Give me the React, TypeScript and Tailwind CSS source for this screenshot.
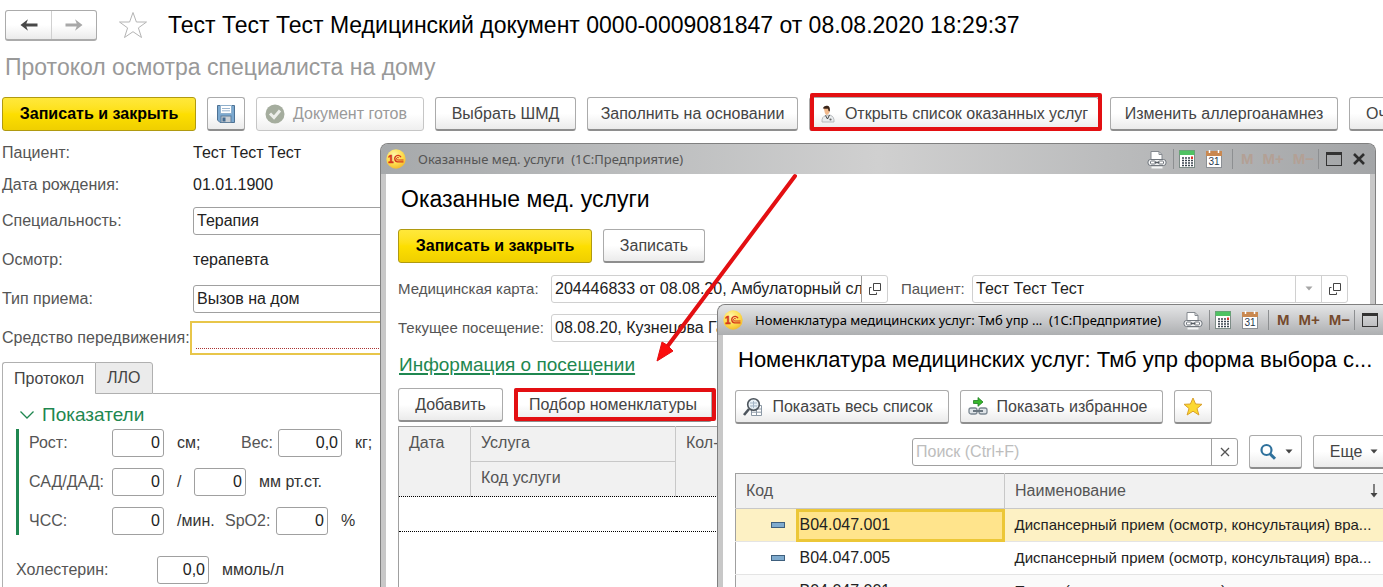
import { useId, useState } from 'react'
import type { ReactNode } from 'react'
import clsx from 'clsx'

const services = [
  { code: 'B04.047.001', name: 'Диспансерный прием (осмотр, консультация) вра...' },
  { code: 'B04.047.005', name: 'Диспансерный прием (осмотр, консультация) вра...' },
  { code: 'B04.047.001', name: 'Прием (осмотр, консультация) врача' },
]

/* ---------- icons ---------- */

function ArrowIcon({ flip = false }: { flip?: boolean }) {
  return (
    <svg viewBox="0 0 18 14" className={clsx('w-[18px] h-[14px]', flip ? 'text-[#a8a8a8]' : 'text-[#484848]')}>
      <g transform={flip ? 'translate(18 0) scale(-1 1)' : undefined}>
        <path d="M0.500 7 L8 1.300 L6.300 5.600 H17.500 V8.400 H6.300 L8 12.700 Z" fill="currentColor" />
      </g>
    </svg>
  )
}

function StarOutline() {
  return (
    <svg viewBox="0 0 30 28" className="w-[30px] h-[28px]">
      <path
        d="M15 1.500 L18.400 11 H28.500 L20.400 16.900 L23.500 26.500 L15 20.700 L6.500 26.500 L9.600 16.900 L1.500 11 H11.600 Z"
        fill="#fff"
        stroke="#b4b4b4"
      />
    </svg>
  )
}

function StarFilled() {
  return (
    <svg viewBox="0 0 20 19" className="w-5 h-[19px]">
      <path
        d="M10 1 L12.600 7 L19 7.300 L14 11.500 L15.900 18 L10 14.200 L4.100 18 L6 11.500 L1 7.300 L7.400 7 Z"
        fill="#fcd931"
        stroke="#d9a02c"
        strokeLinejoin="round"
      />
    </svg>
  )
}

function DiskIcon() {
  return (
    <svg viewBox="0 0 18 18" className="size-[18px]">
      <path d="M0.500 0.500 H17.500 V17.500 H3 L0.500 15 Z" fill="#7ba9d0" stroke="#4d7193" />
      <rect x="3.500" y="0.500" width="11" height="8" fill="#fff" stroke="#8fb0cc" />
      <path d="M5 3.500 H13 M5 5.800 H13" stroke="#9bb6cf" />
      <rect x="4" y="11" width="10" height="6.500" fill="#c9ced3" stroke="#5f7f9c" />
      <rect x="5.500" y="12.500" width="3" height="4" fill="#41698f" />
    </svg>
  )
}

function ReadyIcon() {
  return (
    <svg viewBox="0 0 20 20" className="size-5">
      <circle cx="10" cy="10" r="9.500" fill="#a5ad9e" />
      <path d="M5 9.500 L9 13.500 L15 6.500" fill="none" stroke="#eceeea" strokeWidth="3" />
    </svg>
  )
}

function DoctorIcon() {
  return (
    <svg viewBox="0 0 16 18" className="w-4 h-[18px]">
      <path d="M2 17 Q1.500 11.500 6 10.500 L10 10 Q14.500 11.500 14 17 Z" fill="#e9ecee" stroke="#a9adb0" strokeWidth="0.800" />
      <path d="M3.500 3 Q6 0.800 9 3 L9.500 7.500 Q8 10.500 6 9.800 Q4.500 8 4.200 5 Z" fill="#f1b98c" />
      <path d="M2.800 3.300 Q4 0 7.500 0.800 Q10.500 1.500 9.800 6.500 L8.600 6 L8 3.800 Q5 4 2.800 3.300 Z" fill="#3a2418" />
      <path d="M5.500 10.500 L7.500 14 L9.500 10" fill="none" stroke="#444" strokeWidth="1" />
      <circle cx="10.500" cy="14.500" r="1.100" fill="#666" />
    </svg>
  )
}

function Logo() {
  const id = useId()
  return (
    <svg viewBox="0 0 20 20" className="size-5 shrink-0">
      <defs>
        <radialGradient id={id} cx="0.4" cy="0.3" r="0.75">
          <stop offset="0" stopColor="#fff6a8" />
          <stop offset="0.6" stopColor="#fddc4c" />
          <stop offset="1" stopColor="#f2b62c" />
        </radialGradient>
      </defs>
      <circle cx="10" cy="10" r="9.700" fill={`url(#${id})`} />
      <text x="2" y="13.500" fontSize="10" fontWeight="700" fontFamily="Liberation Sans, sans-serif" fill="#d4371b" stroke="#d4371b" strokeWidth="0.500">
        1
      </text>
      {/* concentric arcs running into the long foot of the mark */}
      <path d="M15 8.200 A3.300 3.300 0 1 0 11.500 12.900 H17.500" fill="none" stroke="#d4371b" strokeWidth="1.400" />
      <path d="M12.900 9 A1.300 1.300 0 1 0 12 11 H17.500" fill="none" stroke="#d4371b" strokeWidth="1" />
    </svg>
  )
}

function PrinterIcon() {
  return (
    <svg viewBox="0 0 20 19" className="w-5 h-[19px]">
      <path d="M4 10 V1.500 H12 L15 4.500 V10" fill="#fff" stroke="#84898f" />
      <path d="M12 1.500 V4.500 H15" fill="none" stroke="#84898f" />
      <rect x="1" y="9.500" width="18" height="6" rx="2.500" fill="#f4f5f6" stroke="#70767d" />
      <rect x="3.500" y="11" width="5" height="3" rx="1" fill="#fff" stroke="#70767d" />
      <rect x="11.500" y="11" width="5" height="3" rx="1" fill="#fff" stroke="#70767d" />
      <path d="M7.500 12.500 H12.500" stroke="#555b62" strokeWidth="1.500" />
      <path d="M4.500 17.500 H15.500" stroke="#f4f5f6" strokeWidth="2" />
    </svg>
  )
}

function CalcIcon() {
  return (
    <svg viewBox="0 0 16 18" className="w-4 h-[18px]">
      <rect x="0.500" y="0.500" width="15" height="17" fill="#fff" stroke="#7c8b86" />
      <rect x="0.500" y="0.500" width="15" height="4.500" fill="#4fc262" />
      <path
        d="M3 8 H5 M6 8 H8 M9 8 H11 M3 10.500 H5 M6 10.500 H8 M9 10.500 H11 M3 13 H5 M6 13 H8 M9 13 H11 M3 15.500 H5 M6 15.500 H8 M9 15.500 H11 M12 10.500 H14 M12 13 H14 M12 15.500 H14"
        stroke="#3c4650"
        strokeWidth="1.600"
      />
      <path d="M12 7.800 H14" stroke="#d9342b" strokeWidth="2.400" />
    </svg>
  )
}

function CalendarIcon() {
  return (
    <svg viewBox="0 0 16 18" className="w-4 h-[18px]">
      <rect x="0.500" y="1.500" width="15" height="16" fill="#fff" stroke="#8b8f94" />
      <rect x="0" y="1" width="16" height="5" fill="#c98850" />
      <path d="M3.500 0 V3 M12.500 0 V3" stroke="#fff" strokeWidth="1.500" />
      <text x="8" y="15.300" textAnchor="middle" fontSize="10" fontFamily="Liberation Sans, sans-serif" fill="#26384e">
        31
      </text>
    </svg>
  )
}

function MaximizeIcon() {
  return (
    <svg viewBox="0 0 16 14" className="w-4 h-[14px]">
      <rect x="0.500" y="0.500" width="15" height="13" fill="none" stroke="#333" />
      <path d="M0.500 1.500 H15.500" stroke="#333" strokeWidth="3" />
    </svg>
  )
}

function CloseIcon() {
  return (
    <svg viewBox="0 0 12 12" className="size-3">
      <path d="M1 1 L11 11 M11 1 L1 11" stroke="#2e2e2e" strokeWidth="2.600" />
    </svg>
  )
}

function OpenIcon() {
  return (
    <svg viewBox="0 0 12 12" className="size-3">
      <path d="M4.500 0.500 H11.500 V7.500 H4.500 Z M2.500 4.500 H0.500 V11.500 H7.500 V9.500" fill="none" stroke="#444" />
    </svg>
  )
}

function ListSearchIcon() {
  return (
    <svg viewBox="0 0 20 20" className="size-5">
      <path d="M8.500 8.500 H18.500 V18.500 H8.500 Z M8.500 12 H18.500 M8.500 15.200 H18.500 M13.500 8.500 V18.500" fill="#fff" stroke="#8b98a5" />
      <circle cx="10.500" cy="7.500" r="5.800" fill="#e4edf4" fillOpacity="0.850" stroke="#4c545c" strokeWidth="1.600" />
      <path d="M7 6 H14 M7 9 H14 M10.500 4 V11" stroke="#a3b5c6" />
      <path d="M6 12 L1 18" stroke="#4c545c" strokeWidth="2.600" />
    </svg>
  )
}

function FavoritesIcon() {
  return (
    <svg viewBox="0 0 20 19" className="w-5 h-[19px]">
      <path d="M5.500 3.500 H10 V0.500 L15 5 L10 9.300 V6.500 H5.500 Z" fill="#38b72c" stroke="#1e7d22" strokeWidth="0.800" />
      <rect x="1" y="11" width="8" height="6" rx="2" fill="#dfe4e8" stroke="#7b8791" strokeWidth="1.300" />
      <rect x="11" y="11" width="8" height="6" rx="2" fill="#dfe4e8" stroke="#7b8791" strokeWidth="1.300" />
      <path d="M5 14 H15" stroke="#6a7680" strokeWidth="1.800" />
    </svg>
  )
}

function MagnifierIcon() {
  return (
    <svg viewBox="0 0 18 18" className="size-[18px]">
      <circle cx="7.500" cy="7" r="5" fill="none" stroke="#2f719c" strokeWidth="2.200" />
      <path d="M11 10.800 L16 15.800" stroke="#2f719c" strokeWidth="3" />
    </svg>
  )
}

function Caret({ light = false }: { light?: boolean }) {
  return (
    <svg viewBox="0 0 8 5" className="w-2 h-[5px]">
      <path d="M0.500 0.500 H7.500 L4 4.500 Z" fill={light ? '#a5a5a5' : '#444'} />
    </svg>
  )
}

/* ---------- controls ---------- */

type ButtonProps = {
  children: ReactNode
  variant?: 'plain' | 'primary' | 'muted'
  label?: string
  className?: string
  disabled?: boolean
}

function Button({ children, variant = 'plain', label, className, disabled }: ButtonProps) {
  return (
    <button
      type="button"
      aria-label={label}
      disabled={disabled}
      className={clsx(
        'relative flex h-[34px] shrink-0 items-center justify-center rounded-[3px] border whitespace-nowrap',
        variant === 'primary' &&
          'w-[194px] border-[#b09a10] bg-linear-to-b from-[#ffe83a] via-[#fddf00] to-[#efcf00] font-bold text-black',
        variant === 'plain' && 'border-[#ababab] border-b-[#8e8e8e] border-b-2 bg-linear-to-b from-white from-50% to-[#ebebeb] text-[#444]',
        variant === 'muted' && 'border-[#c6c6c6] bg-linear-to-b from-white from-50% to-[#efefef] text-[#9a9a9a]',
        className,
      )}
    >
      {children}
    </button>
  )
}

function NumberField({ label, value, wide = false }: { label: string; value: string; wide?: boolean }) {
  return (
    <input
      aria-label={label}
      defaultValue={value}
      className={clsx('h-7 shrink-0 rounded-[3px] border border-[#a0a0a0] bg-white px-[3px] text-right text-[#222]', wide ? 'w-16' : 'w-[52px]')}
    />
  )
}

function Field({ label, children, className }: { label: string; children: ReactNode; className?: string }) {
  return (
    <label className={clsx('flex items-center', className ?? 'h-[39px]')}>
      <span className="w-[191px] shrink-0 whitespace-nowrap">{label}</span>
      {children}
    </label>
  )
}

function TitleBar({ title, active = false, closable = false }: { title: string; active?: boolean; closable?: boolean }) {
  return (
    <header
      className={clsx(
        'flex h-[30px] shrink-0 items-center pl-[5px] font-["Noto_Sans","Liberation_Sans",sans-serif] text-[13px]',
        active
          ? 'bg-linear-to-b from-[#e4e5e6] via-[#c9cacc] to-[#adafb1] text-black'
          : 'bg-linear-to-r from-[#a6a9ab] via-[#d0d0d0] to-[#a3a5a7] text-[#555]',
      )}
    >
      <Logo />
      <span className="ml-3 min-w-0 flex-1 truncate whitespace-pre">{title}</span>
      <div className="flex h-full shrink-0 items-center">
        <button type="button" aria-label="Печать" className="pr-[6px]"><PrinterIcon /></button>
        <span className="h-5 w-px bg-[#8d8f91]" />
        <button type="button" aria-label="Калькулятор" className="pr-[11px] pl-[5px]"><CalcIcon /></button>
        <button type="button" aria-label="Календарь" className="pr-[10px]"><CalendarIcon /></button>
        <span className="h-5 w-px bg-[#8d8f91]" />
        <div
          className={clsx(
            'flex w-[85px] gap-[9px] pl-2 font-["Liberation_Sans",sans-serif] text-[15px] font-bold whitespace-nowrap',
            active ? 'text-[#754a2d]' : 'text-[#b3a095]',
          )}
        >
          <button type="button">M</button>
          <button type="button">M+</button>
          <button type="button">M−</button>
        </div>
        <span className="h-5 w-px bg-[#8d8f91]" />
        <button type="button" aria-label="Развернуть" className="pr-[5px] pl-[7px]"><MaximizeIcon /></button>
        {closable && <button type="button" aria-label="Закрыть" className="pr-[10px] pl-[6px]"><CloseIcon /></button>}
      </div>
    </header>
  )
}

function Highlight({ className }: { className: string }) {
  return <span className={clsx('pointer-events-none absolute rounded-[2px] border-4 border-[#e30f12]', className)} />
}

/* ---------- document form ---------- */

function ProtocolForm() {
  const [tab, setTab] = useState('Протокол')
  return (
    <section className="flex flex-col pr-4 text-[#555]">
      <div className="mt-[6px] pl-[2px]">
        <Field label="Пациент:" className="h-8"><output className="text-[#222]">Тест Тест Тест</output></Field>
        <Field label="Дата рождения:" className="h-8"><output className="text-[#222]">01.01.1900</output></Field>
        <Field label="Специальность:">
          <input defaultValue="Терапия" className="h-7 min-w-0 flex-1 rounded-[3px] border border-[#a0a0a0] px-[3px] text-[#222]" />
        </Field>
        <Field label="Осмотр:"><output className="text-[#222]">терапевта</output></Field>
        <Field label="Тип приема:">
          <input defaultValue="Вызов на дом" className="h-7 min-w-0 flex-1 rounded-[3px] border border-[#a0a0a0] px-[3px] text-[#222]" />
        </Field>
        <Field label="Средство передвижения:">
          <span className="-ml-[3px] flex h-[34px] flex-1 border-2 border-[#e8c64a] px-1 pb-1">
            <input className="w-full border-b border-dotted border-[#a33] outline-none" />
          </span>
        </Field>
      </div>

      <div className="mt-[5px] ml-[2px] flex" role="tablist">
        {['Протокол', 'ЛЛО'].map((name) => (
          <button
            key={name}
            type="button"
            role="tab"
            aria-selected={tab === name}
            onClick={() => setTab(name)}
            className={clsx(
              'h-8 border-[#b0b0b0] px-[11px] text-[#444]',
              tab === name ? 'rounded-tl-[3px] border-t border-l' : 'rounded-tr-[3px] border bg-[#ebebeb]',
            )}
          >
            {name}
          </button>
        ))}
        <span className="flex-1 border-b border-[#b0b0b0]" />
      </div>

      <div className="ml-[2px] h-[220px] border-l border-[#b0b0b0] pt-[7px] pl-[13px]">
        <button type="button" className="flex h-7 items-center gap-2 pl-1 text-[19px] text-[#1f8750]">
          <svg viewBox="0 0 14 8" className="w-[14px] h-2"><path d="M0.500 0.500 L7 7 L13.500 0.500" fill="none" stroke="currentColor" strokeWidth="1.300" /></svg>
          Показатели
        </button>
        <div className="flex flex-col gap-[11px] border-l-3 border-[#1f8750] pl-[10px]">
          <div className="flex h-7 items-center">
            <span className="w-[83px]">Рост:</span>
            <NumberField label="Рост" value="0" />
            <span className="ml-[13px] w-16 text-[#333]">см;</span>
            <span className="w-[37px]">Вес:</span>
            <NumberField label="Вес" value="0,0" wide />
            <span className="ml-[13px] text-[#333]">кг;</span>
          </div>
          <div className="flex h-7 items-center">
            <span className="w-[83px]">САД/ДАД:</span>
            <NumberField label="САД" value="0" />
            <span className="ml-[13px] w-[17px] text-[#333]">/</span>
            <NumberField label="ДАД" value="0" />
            <span className="ml-[13px] text-[#333]">мм рт.ст.</span>
          </div>
          <div className="flex h-7 items-center">
            <span className="w-[83px]">ЧСС:</span>
            <NumberField label="ЧСС" value="0" />
            <span className="ml-[13px] w-12 text-[#333]">/мин.</span>
            <span className="w-[51px]">SpO2:</span>
            <NumberField label="SpO2" value="0" />
            <span className="ml-[13px] text-[#333]">%</span>
          </div>
        </div>
        <div className="mt-[21px] flex h-7 items-center">
          <span className="w-[141px]">Холестерин:</span>
          <NumberField label="Холестерин" value="0,0" />
          <span className="ml-[13px] text-[#333]">ммоль/л</span>
        </div>
      </div>
    </section>
  )
}

/* ---------- services window ---------- */

function ServicesWindow() {
  return (
    <section className="absolute top-[143px] right-[7px] bottom-0 left-[380px] flex flex-col overflow-hidden rounded-t-lg border border-b-0 border-[#808080] bg-[#c8c8c8]">
      <TitleBar title="Оказанные мед. услуги  (1С:Предприятие)" closable />
      <div className="mx-[5px] flex-1 overflow-hidden bg-white pt-3 pl-3 text-[#555]">
        <h2 className="h-[26px] pl-[3px] text-[23px] leading-[26px] text-black">Оказанные мед. услуги</h2>
        <div className="mt-[17px] flex gap-[11px]">
          <Button variant="primary">Записать и закрыть</Button>
          <Button className="w-[102px]">Записать</Button>
        </div>
        <div className="mt-[6px] flex h-[39px] items-center pr-[22px]">
          <label htmlFor="card" className="w-[153px] shrink-0 text-[15px] whitespace-nowrap">Медицинская карта:</label>
          <div className="flex h-7 w-[337px] rounded-[3px] border border-[#d0d0d0]">
            <input id="card" defaultValue="204446833 от 08.08.20, Амбулаторный сл" className="min-w-0 flex-1 pl-[3px] text-[#222]" />
            <button type="button" aria-label="Открыть карту" className="flex w-[26px] items-center justify-center border-l border-[#a0a0a0]"><OpenIcon /></button>
          </div>
          <label htmlFor="patient" className="ml-[13px] w-[71px] shrink-0 text-[15px]">Пациент:</label>
          <div className="flex h-7 flex-1 rounded-[3px] border border-[#d0d0d0]">
            <input id="patient" defaultValue="Тест Тест Тест" className="min-w-0 flex-1 pl-[3px] text-[#222]" />
            <button type="button" aria-label="Выбрать пациента" className="flex w-[26px] items-center justify-center border-l border-[#d0d0d0]"><Caret light /></button>
            <button type="button" aria-label="Открыть пациента" className="flex w-[26px] items-center justify-center border-l border-[#d0d0d0]"><OpenIcon /></button>
          </div>
        </div>
        <div className="flex h-[39px] items-center">
          <label htmlFor="visit" className="w-[153px] shrink-0 text-[15px] whitespace-nowrap">Текущее посещение:</label>
          <input id="visit" defaultValue="08.08.20, Кузнецова Га" className="h-7 w-[337px] rounded-[3px] border border-[#d0d0d0] pl-[3px] text-[#222]" />
        </div>
        <a href="#visit" className="mt-1 ml-px block h-7 w-fit text-[19px] leading-7 text-[#1f8750] underline decoration-2 underline-offset-2">
          Информация о посещении
        </a>
        <div className="mt-[9px] flex gap-[11px]">
          <Button className="w-[105px]">Добавить</Button>
          <Button className="w-[198px]">
            Подбор номенклатуры
            <Highlight className="-inset-y-px -right-[5px] -left-px" />
          </Button>
        </div>
        <table className="mt-1 w-full table-fixed border-collapse border-t border-l border-[#a0a0a0] text-left text-[#555]">
          <colgroup>
            <col className="w-[72px]" />
            <col className="w-[205px]" />
            <col />
          </colgroup>
          <thead className="bg-[#f1f1f1] align-top">
            <tr className="h-[35px]">
              <th rowSpan={2} className="border-r border-[#c8c8c8] px-[10px] pt-[6px] font-normal">Дата</th>
              <th className="border-r border-b border-[#c8c8c8] px-[10px] pt-[6px] font-normal">Услуга</th>
              <th rowSpan={2} className="px-[10px] pt-[6px] font-normal">Кол-</th>
            </tr>
            <tr className="h-[35px]">
              <th className="border-r border-[#c8c8c8] px-[10px] pt-[6px] font-normal">Код услуги</th>
            </tr>
          </thead>
          <tbody>
            <tr className="h-[35px]">
              <td colSpan={3} className="border border-dotted border-black" />
            </tr>
            <tr className="h-[80px]"><td colSpan={3} /></tr>
          </tbody>
        </table>
      </div>
    </section>
  )
}

/* ---------- nomenclature window ---------- */

function NomenclatureWindow() {
  const [selected, setSelected] = useState(0)
  return (
    <section className="absolute top-[304px] right-0 bottom-0 left-[717px] flex flex-col overflow-hidden rounded-tl-lg border-t border-l border-[#808080] bg-[#c8c8c8]">
      <TitleBar title="Номенклатура медицинских услуг: Тмб упр ...  (1С:Предприятие)" active />
      <div className="ml-[5px] flex-1 overflow-hidden bg-white pt-3 pl-3 text-[#444]">
        <h2 className="h-[26px] overflow-hidden pl-[3px] text-[22px] leading-[26px] whitespace-nowrap text-black">
          Номенклатура медицинских услуг: Тмб упр форма выбора с...
        </h2>
        <div className="mt-[17px] flex gap-[11px]">
          <Button className="w-[214px] gap-[9px] pr-2"><ListSearchIcon />Показать весь список</Button>
          <Button className="w-[203px] gap-[9px] pr-2"><FavoritesIcon />Показать избранное</Button>
          <Button label="Избранное" className="w-[38px]"><StarFilled /></Button>
        </div>
        <div className="-mr-4 mt-[11px] flex items-center justify-end gap-[11px]">
          <div className="flex h-7 w-[326px] rounded-[3px] border border-[#a0a0a0]">
            <input aria-label="Поиск" placeholder="Поиск (Ctrl+F)" className="min-w-0 flex-1 pl-[3px] placeholder:text-[#bdbdbd]" />
            <button type="button" aria-label="Очистить" className="flex w-[26px] items-center justify-center border-l border-[#a0a0a0]">
              <svg viewBox="0 0 10 10" className="size-[10px]"><path d="M1 1 L9 9 M9 1 L1 9" stroke="#555" strokeWidth="1.300" /></svg>
            </button>
          </div>
          <Button label="Найти" className="w-[53px] gap-2"><MagnifierIcon /><Caret /></Button>
          <Button className="w-[86px] gap-2 pr-1">Еще<Caret /></Button>
        </div>
        <table className="mt-1 w-full table-fixed border-collapse border-t border-l border-[#a0a0a0] text-left">
          <colgroup>
            <col className="w-[60px]" />
            <col className="w-[209px]" />
            <col />
          </colgroup>
          <thead className="bg-[#f1f1f1] text-[#555]">
            <tr className="h-[35px] border-b border-[#c8c8c8]">
              <th colSpan={2} className="border-r border-[#c8c8c8] px-[10px] font-normal">Код</th>
              <th className="px-[10px] font-normal">
                <span className="flex items-center justify-between">
                  Наименование
                  <svg viewBox="0 0 8 14" className="-mr-[5px] w-2 h-[14px]"><path d="M4 0 V12" stroke="#444" strokeWidth="1.300" /><path d="M0.500 9 H7.500 L4 13.500 Z" fill="#444" /></svg>
                </span>
              </th>
            </tr>
          </thead>
          <tbody className="text-[#222]">
            {services.map((row, i) => (
              <tr
                key={i}
                onClick={() => setSelected(i)}
                className={clsx('h-[33px] border-b border-[#e4e4e4]', i === selected ? 'bg-[#fdf1c4]' : i === 2 && 'bg-[#fafafa]')}
              >
                <td>
                  <svg viewBox="0 0 14 6" className="ml-[35px] w-[14px] h-[6px]"><rect x="0.500" y="0.500" width="13" height="5" fill="#7fabce" stroke="#3e5f7d" /></svg>
                </td>
                <td className={clsx('px-1', i === selected && 'bg-[#ffe48c] outline-3 -outline-offset-3 outline-[#ecc737]')}>{row.code}</td>
                <td className="overflow-hidden pl-[10px] text-[15px] whitespace-nowrap">{row.name}</td>
              </tr>
            ))}
          </tbody>
        </table>
      </div>
    </section>
  )
}

export default function App() {
  return (
    <main className='relative h-screen overflow-hidden bg-white font-["Liberation_Sans",Arial,sans-serif] text-base leading-5'>
      <header className="flex h-[50px] items-center pl-[5px]">
        <div className="flex h-[31px] rounded-[3px] border border-b-2 border-[#ababab] bg-linear-to-b from-white from-50% to-[#ebebeb]">
          <button type="button" aria-label="Назад" className="flex w-[45px] items-center justify-center"><ArrowIcon /></button>
          <button type="button" aria-label="Вперед" className="flex w-[45px] items-center justify-center border-l border-[#d0d0d0]"><ArrowIcon flip /></button>
        </div>
        <button type="button" aria-label="В избранное" className="ml-[21px]"><StarOutline /></button>
        <h1 className="ml-5 text-[23px] whitespace-nowrap text-black">
          Тест Тест Тест Медицинский документ 0000-0009081847 от 08.08.2020 18:29:37
        </h1>
      </header>
      <p className="h-[47px] pl-[5px] text-[23px] leading-[34px] text-[#999]">Протокол осмотра специалиста на дому</p>
      <div className="flex gap-[11px] pl-[2px]">
        <Button variant="primary">Записать и закрыть</Button>
        <Button label="Записать" className="w-[38px]"><DiskIcon /></Button>
        <Button variant="muted" disabled className="w-[168px] gap-2 pr-2"><ReadyIcon />Документ готов</Button>
        <Button className="w-[141px]">Выбрать ШМД</Button>
        <Button className="w-[211px]">Заполнить на основании</Button>
        <Button className="w-[290px] gap-[9px]">
          <DoctorIcon />
          Открыть список оказанных услуг
          <Highlight className="-top-[5px] -right-1 -bottom-[2px] left-0" />
        </Button>
        <Button className="w-[228px]">Изменить аллергоанамнез</Button>
        <Button className="px-4">Оч</Button>
      </div>
      <ProtocolForm />
      <ServicesWindow />
      <NomenclatureWindow />
      <svg viewBox="0 0 142 190" className="pointer-events-none absolute top-[173px] left-[655px] h-[190px] w-[142px]">
        <path d="M140 3 L12 174" stroke="#e30f12" strokeWidth="4" strokeLinecap="round" />
        <path d="M2 188 L7 169 L12 172 L18 178 Z" fill="#fb0d0d" stroke="#e30f12" strokeWidth="1" />
      </svg>
    </main>
  )
}
